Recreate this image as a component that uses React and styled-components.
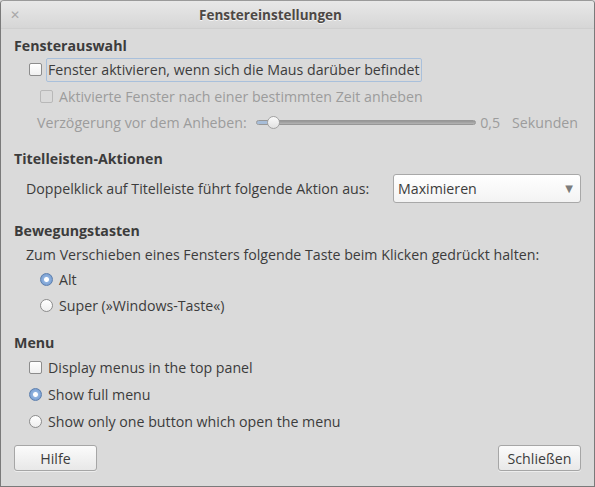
import React from "react";
import styled, { createGlobalStyle } from "styled-components";

const Global = createGlobalStyle`
  html, body { margin: 0; padding: 0; background: #d8d8d8; }
  body { font-family: "Open Sans", "DejaVu Sans", sans-serif; font-size: 14.2px; color: #3c3c3c; }
  * { box-sizing: border-box; }
`;

const Window = styled.div`
  width: 595px;
  height: 487px;
  border: 1px solid #7a7a7a;
  border-top-color: #9a9a9a;
  border-radius: 4px 4px 0 0;
  background: #dadada;
  display: flex;
  flex-direction: column;
  overflow: hidden;
`;

const TitleBar = styled.div`
  height: 28px;
  flex: none;
  display: grid;
  grid-template-columns: 40px 1fr 40px;
  align-items: center;
  background: linear-gradient(#e8e8e8, #d6d6d6);
  border-bottom: 1px solid #cfcfcf;
`;

const CloseX = styled.span`
  padding-left: 9px;
  color: #a8a8a8;
  font-size: 12px;
  font-weight: bold;
`;

const Title = styled.div`
  text-align: center;
  padding-right: 54px;
  font-weight: bold;
  font-size: 13.5px;
  color: #4d4845;
  text-shadow: 0 1px 0 #f4f4f4;
`;

const Body = styled.div`
  flex: 1;
  padding: 4px 13px 0 13px;
  display: flex;
  flex-direction: column;
`;

const Heading = styled.div`
  height: 24px;
  flex: none;
  display: flex;
  align-items: center;
  font-weight: bold;
  color: #3c3c3c;
  margin-top: ${(p) => p.$top || 0}px;
`;

const Row = styled.div`
  height: ${(p) => p.$h || 26}px;
  flex: none;
  display: flex;
  align-items: center;
  padding-left: ${(p) => p.$indent || 0}px;
  color: ${(p) => (p.$disabled ? "#9c9c9c" : "#3c3c3c")};
  gap: 6px;
`;

const Box = styled.span`
  width: 13px;
  height: 13px;
  border: 1px solid ${(p) => (p.$disabled ? "#b8b8b8" : "#8c8c8c")};
  border-radius: 2px;
  background: ${(p) => (p.$disabled ? "transparent" : "linear-gradient(#ffffff, #f0f0f0)")};
  flex: none;
`;

const Radio = styled.span`
  width: 13px;
  height: 13px;
  border-radius: 50%;
  flex: none;
  border: 1px solid ${(p) => (p.$on ? "#5c7fae" : "#8c8c8c")};
  background: ${(p) =>
    p.$on
      ? "radial-gradient(circle, #ffffff 0 2px, #8fb2df 3px, #6c92c8 100%)"
      : "linear-gradient(#ffffff, #efefef)"};
`;

const Focus = styled.span`
  border: 1px solid #a9c0db;
  border-radius: 2px;
  padding: 1px 1px 2px 1px;
  margin-left: -2px;
`;

const SliderRow = styled(Row)`
  gap: 0;
  padding-right: 3px;
  color: #9c9c9c;
`;

const Track = styled.div`
  position: relative;
  flex: 1;
  height: 5px;
  margin: 0 4px 0 9px;
  border-radius: 3px;
  background: linear-gradient(#969696, #b4b4b4);
  border: 1px solid #979797;
`;

const Fill = styled.div`
  height: 100%;
  border-radius: 3px;
  background: #a7bdd8;
`;

const Knob = styled.div`
  position: absolute;
  top: -5px;
  width: 13px;
  height: 13px;
  border-radius: 50%;
  border: 1px solid #a2a2a2;
  background: linear-gradient(#fafafa, #e2e2e2);
`;

const Unit = styled.span`
  margin-left: 12px;
`;

const Select = styled.div`
  width: 188px;
  height: 29px;
  margin-left: auto;
  border: 1px solid #a8a8a8;
  border-radius: 3px;
  background: linear-gradient(#ffffff, #f3f3f3);
  display: flex;
  align-items: center;
  justify-content: space-between;
  padding: 0 7px 0 4px;
  color: #3c3c3c;
`;

const Arrow = styled.span`
  font-size: 10px;
  color: #7c7c7c;
`;

const Footer = styled.div`
  margin-top: 11px;
  display: flex;
  justify-content: space-between;
`;

const Button = styled.button`
  width: 83px;
  height: 26px;
  font: inherit;
  color: #3c3c3c;
  border: 1px solid #a6a6a6;
  border-radius: 3px;
  background: linear-gradient(#fbfbfb, #e8e8e8);
  box-shadow: 0 1px 0 rgba(255, 255, 255, 0.5);
`;

export default function App() {
  const delay = 0.077;
  return (
    <>
      <Global />
      <Window>
        <TitleBar>
          <CloseX>✕</CloseX>
          <Title>Fenstereinstellungen</Title>
          <span />
        </TitleBar>
        <Body>
          <Heading>Fensterauswahl</Heading>
          <Row $indent={15} $h={25}>
            <Box />
            <Focus>Fenster aktivieren, wenn sich die Maus darüber befindet</Focus>
          </Row>
          <Row $indent={26} $disabled $h={28}>
            <Box $disabled />
            Aktivierte Fenster nach einer bestimmten Zeit anheben
          </Row>
          <SliderRow $indent={23} $h={24}>
            Verzögerung vor dem Anheben:
            <Track>
              <Fill style={{ width: `${delay * 100}%` }} />
              <Knob style={{ left: `calc(${delay * 100}% - 6px)` }} />
            </Track>
            0,5
            <Unit>Sekunden</Unit>
          </SliderRow>
          <Heading $top={12}>Titelleisten-Aktionen</Heading>
          <Row $indent={12} $h={36}>
            Doppelklick auf Titelleiste führt folgende Aktion aus:
            <Select>
              Maximieren
              <Arrow>▼</Arrow>
            </Select>
          </Row>
          <Heading $top={12}>Bewegungstasten</Heading>
          <Row $indent={12} $h={24}>
            Zum Verschieben eines Fensters folgende Taste beim Klicken gedrückt halten:
          </Row>
          <Row $indent={26}>
            <Radio $on />
            Alt
          </Row>
          <Row $indent={26}>
            <Radio />
            Super (»Windows-Taste«)
          </Row>
          <Heading $top={12}>Menu</Heading>
          <Row $indent={15}>
            <Box />
            Display menus in the top panel
          </Row>
          <Row $indent={15} $h={28}>
            <Radio $on />
            Show full menu
          </Row>
          <Row $indent={15}>
            <Radio />
            Show only one button which open the menu
          </Row>
          <Footer>
            <Button>Hilfe</Button>
            <Button>Schließen</Button>
          </Footer>
        </Body>
      </Window>
    </>
  );
}
